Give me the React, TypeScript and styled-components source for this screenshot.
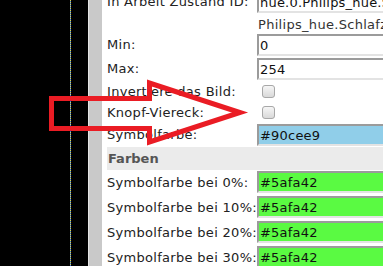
import React from "react";
import styled, { createGlobalStyle } from "styled-components";

const GlobalStyle = createGlobalStyle`
  html, body {
    margin: 0;
    padding: 0;
    background: #fff;
    overflow: hidden;
  }
`;

/* Frame */

const Screen = styled.div`
  position: relative;
  display: flex;
  width: 383px;
  height: 266px;
  overflow: hidden;
  font-family: "DejaVu Sans", Verdana, sans-serif;
  font-size: 13px;
  color: #222;
`;

const Desktop = styled.div`
  flex: none;
  display: flex;
  width: 88px;
  background: #000;
`;

const DottedRule = styled.div`
  margin-left: 70px;
  width: 1px;
  background: repeating-linear-gradient(
    to bottom,
    #e8dc30 0 1px,
    #2f6cf5 1px 2px
  );
`;

const Gutter = styled.div`
  flex: none;
  width: 13px;
  background: #c9c9c9;
  border-left: 1px solid #e4e4e4;
`;

const Panel = styled.div`
  flex: 1;
  min-width: 0;
  overflow: hidden;
  background: #fff;
  padding-left: 5px;
`;

/* Table */

const Table = styled.table`
  border-collapse: collapse;
  border-spacing: 0;
  table-layout: fixed;
  width: 360px;
  margin-top: -10px;
`;

const Label = styled.td`
  width: 150px;
  padding: 0;
  line-height: 16px;
  letter-spacing: 0.3px;
  white-space: nowrap;
  vertical-align: middle;
`;

type Pad = "input" | "color" | "check" | "name";

const paddings: Record<Pad, string> = {
  input: "1px 0",
  color: "1px 0 2px",
  check: "1px 0",
  name: "3px 0 0",
};

const Cell = styled.td<{ $pad: Pad }>`
  padding: ${(p) => paddings[p.$pad]};
  line-height: 16px;
  white-space: nowrap;
  vertical-align: middle;
`;

const TextInput = styled.input<{ $bg?: string }>`
  display: block;
  box-sizing: border-box;
  width: 210px;
  height: 22px;
  margin: 0;
  padding: 0 1px;
  border-width: 2px;
  border-style: solid;
  border-color: #9b9b9b #e3e3e3 #e3e3e3 #9b9b9b;
  background: ${(p) => p.$bg || "#fff"};
  font-family: "DejaVu Sans", Verdana, sans-serif;
  font-size: 13px;
  letter-spacing: 0.2px;
  color: #111;
  outline: none;
`;

const CheckBox = styled.input`
  appearance: none;
  display: block;
  box-sizing: border-box;
  width: 13px;
  height: 13px;
  margin: 3px 3px 3px 5px;
  border: 1px solid #a8a8a8;
  border-radius: 3px;
  background: linear-gradient(#f6f6f6, #d9d9d9);
`;

const ObjName = styled.div`
  padding-left: 1px;
  letter-spacing: 0.3px;
  color: #333;
`;

const SectionHead = styled.td`
  height: 23px;
  padding: 0 0 0 1px;
  background: #ebebeb;
  color: #555;
  font-weight: bold;
  vertical-align: middle;
`;

/* Overlay */

const Overlay = styled.svg`
  position: absolute;
  left: 0;
  top: 0;
  pointer-events: none;
`;

const InputRow = ({
  label,
  value,
  bg,
  pad = "input",
}: {
  label: string;
  value: string;
  bg?: string;
  pad?: Pad;
}) => (
  <tr>
    <Label>{label}</Label>
    <Cell $pad={pad}>
      <TextInput value={value} $bg={bg} readOnly />
    </Cell>
  </tr>
);

const CheckRow = ({ label }: { label: string }) => (
  <tr>
    <Label>{label}</Label>
    <Cell $pad="check">
      <CheckBox type="checkbox" />
    </Cell>
  </tr>
);

const levels = ["0", "10", "20", "30"];

export default function App() {
  return (
    <>
      <GlobalStyle />
      <Screen>
        <Desktop>
          <DottedRule />
        </Desktop>
        <Gutter />
        <Panel>
          <Table>
            <tbody>
              <InputRow
                label="In Arbeit Zustand ID:"
                value="hue.0.Philips_hue.Schlafzimmer.on"
              />
              <tr>
                <Label />
                <Cell $pad="name">
                  <ObjName>Philips_hue.Schlafzimmer</ObjName>
                </Cell>
              </tr>
              <InputRow label="Min:" value="0" />
              <InputRow label="Max:" value="254" />
              <CheckRow label="Invertiere das Bild:" />
              <CheckRow label="Knopf-Viereck:" />
              <InputRow label="Symbolfarbe:" value="#90cee9" bg="#90cee9" />
              <tr>
                <SectionHead colSpan={2}>Farben</SectionHead>
              </tr>
              {levels.map((l) => (
                <InputRow
                  key={l}
                  label={`Symbolfarbe bei ${l}%:`}
                  value="#5afa42"
                  bg="#5afa42"
                  pad="color"
                />
              ))}
            </tbody>
          </Table>
        </Panel>
        <Overlay width="383" height="266" viewBox="0 0 383 266">
          <polygon
            points="51.5,98.5 149.5,98.5 149.5,83 240,112.5 149.5,142 149.5,128.5 51.5,128.5"
            fill="none"
            stroke="#ea1c24"
            strokeWidth="5"
            strokeLinejoin="miter"
            strokeMiterlimit="10"
          />
        </Overlay>
      </Screen>
    </>
  );
}
